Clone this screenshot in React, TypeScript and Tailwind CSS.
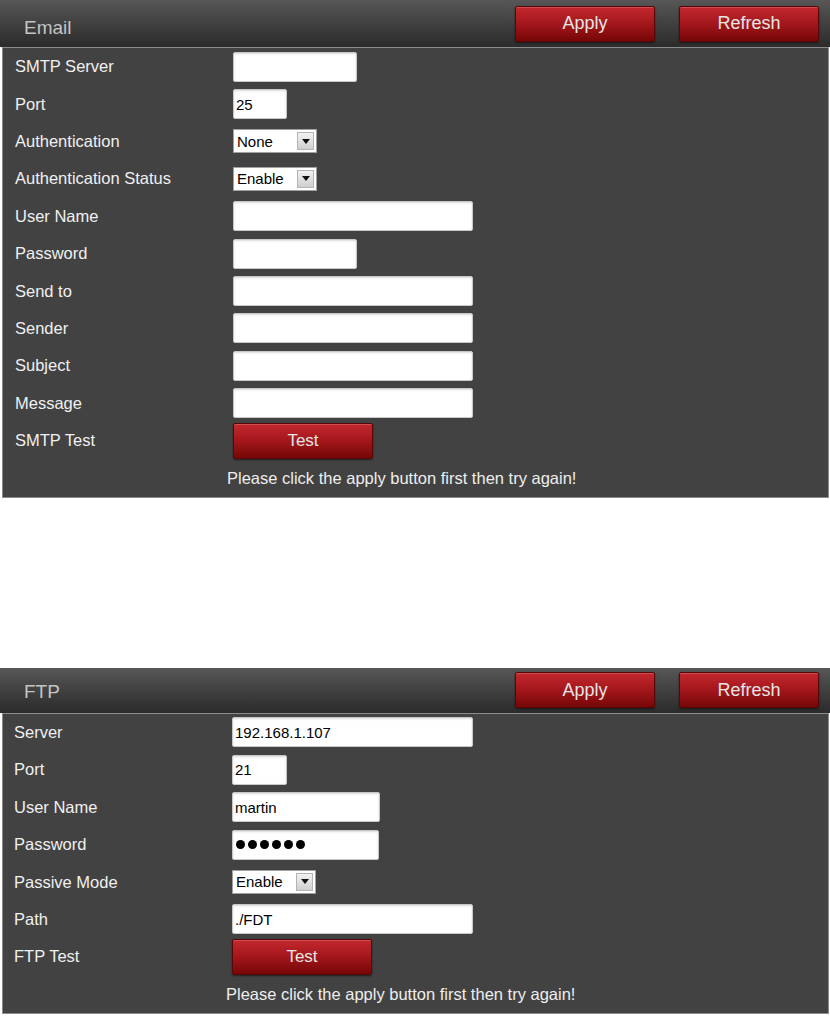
import React from 'react';

const font = { fontFamily: '"Liberation Sans", Arial, sans-serif' };

function RedButton({ label, className = '' }: { label: string; className?: string }) {
  return (
    <button
      type="button"
      className={`flex items-center justify-center rounded-[2px] border border-[#5a0606] bg-linear-to-b from-[#c3282e] via-[#a3161b] to-[#760707] text-[#e6e6e6] shadow-[inset_0_1px_0_rgba(255,255,255,0.18),0_1px_2px_rgba(0,0,0,0.5)] ${className}`}
    >
      {label}
    </button>
  );
}

function TextBox({ value = '', width }: { value?: string; width: string }) {
  return (
    <input
      readOnly
      defaultValue={value}
      className={`${width} h-[30px] rounded-[2px] border border-[#c8c8c8] bg-white px-[2px] text-[15px] text-black shadow-[inset_0_1px_2px_rgba(0,0,0,0.15)] outline-none`}
      style={font}
    />
  );
}

function Dots() {
  return (
    <div className="flex h-[30px] w-[147px] items-center gap-[3px] rounded-[2px] border border-[#c8c8c8] bg-white pl-[3px] shadow-[inset_0_1px_2px_rgba(0,0,0,0.15)]">
      {[0, 1, 2, 3, 4, 5].map((i) => (
        <span key={i} className="h-[9px] w-[9px] rounded-full bg-black" />
      ))}
    </div>
  );
}

function FakeSelect({ value }: { value: string }) {
  return (
    <div className="flex h-[24px] w-[84px] items-center border border-[#a0a0a0] bg-white">
      <span className="flex-1 pl-[3px] text-[15px] leading-none text-black">{value}</span>
      <span className="mr-[2px] flex h-[18px] w-[17px] items-center justify-center border border-[#b4b4b4] bg-linear-to-b from-[#f2f2f2] to-[#cfcfcf]">
        <svg width="8" height="5" viewBox="0 0 8 5">
          <path d="M0 0h8L4 5z" fill="#111" />
        </svg>
      </span>
    </div>
  );
}

type Row = { label: string; field: React.ReactNode };

type PanelProps = {
  title: string;
  rows: Row[];
  labelPad: string;
  fieldLeft: string;
  headerH: string;
  titlePad: string;
};

function Panel({ title, rows, labelPad, fieldLeft, headerH, titlePad }: PanelProps) {
  return (
    <section style={font}>
      <header className={`flex ${headerH} items-center bg-linear-to-b from-[#575757] to-[#2b2b2b] pr-[11px] pl-[24px]`}>
        <h2 className={`flex-1 text-[19px] font-light text-[#c4c4c4] ${titlePad}`}>{title}</h2>
        <div className="flex gap-[24px]">
          <RedButton label="Apply" className="h-[36px] w-[140px] text-[18px]" />
          <RedButton label="Refresh" className="h-[36px] w-[140px] text-[18px]" />
        </div>
      </header>
      <div className="mr-[1px] ml-[2px] border border-[#8c8c8c] bg-[#424242] text-[16.5px] text-[#f0f0f0]">
        {rows.map((r) => (
          <div key={r.label} className="flex h-[37.4px] items-center">
            <span className={`${labelPad} ${fieldLeft} shrink-0`}>{r.label}</span>
            {r.field}
          </div>
        ))}
        <div className="flex h-[37.4px] items-center">
          <span className={`${fieldLeft} shrink-0`} />
          <span className="-ml-[6px] text-[16.5px] text-[#eeeeee]">Please click the apply button first then try again!</span>
        </div>
      </div>
    </section>
  );
}

export default function App() {
  const emailRows: Row[] = [
    { label: 'SMTP Server', field: <TextBox width="w-[124px]" /> },
    { label: 'Port', field: <TextBox width="w-[54px]" value="25" /> },
    { label: 'Authentication', field: <FakeSelect value="None" /> },
    { label: 'Authentication Status', field: <FakeSelect value="Enable" /> },
    { label: 'User Name', field: <TextBox width="w-[240px]" /> },
    { label: 'Password', field: <TextBox width="w-[124px]" /> },
    { label: 'Send to', field: <TextBox width="w-[240px]" /> },
    { label: 'Sender', field: <TextBox width="w-[240px]" /> },
    { label: 'Subject', field: <TextBox width="w-[240px]" /> },
    { label: 'Message', field: <TextBox width="w-[240px]" /> },
    { label: 'SMTP Test', field: <RedButton label="Test" className="h-[36px] w-[140px] text-[17px]" /> },
  ];

  const ftpRows: Row[] = [
    { label: 'Server', field: <TextBox width="w-[241px]" value="192.168.1.107" /> },
    { label: 'Port', field: <TextBox width="w-[55px]" value="21" /> },
    { label: 'User Name', field: <TextBox width="w-[148px]" value="martin" /> },
    { label: 'Password', field: <Dots /> },
    { label: 'Passive Mode', field: <FakeSelect value="Enable" /> },
    { label: 'Path', field: <TextBox width="w-[241px]" value="./FDT" /> },
    { label: 'FTP Test', field: <RedButton label="Test" className="h-[36px] w-[140px] text-[17px]" /> },
  ];

  return (
    <div className="min-h-[1017px] w-[830px] bg-white">
      <Panel
        title="Email"
        rows={emailRows}
        labelPad="pl-[12px]"
        fieldLeft="w-[230px]"
        headerH="h-[47px]"
        titlePad="pt-[10px]"
      />
      <div className="h-[170px]" />
      <Panel
        title="FTP"
        rows={ftpRows}
        labelPad="pl-[11px]"
        fieldLeft="w-[229px]"
        headerH="h-[45px]"
        titlePad="pt-[5px]"
      />
    </div>
  );
}
